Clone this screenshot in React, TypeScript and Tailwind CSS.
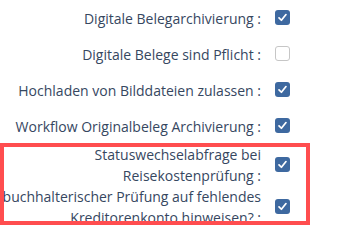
const rows = [
  { lines: ["Digitale Belegarchivierung :"], checked: true },
  { lines: ["Digitale Belege sind Pflicht :"], checked: false },
  { lines: ["Hochladen von Bilddateien zulassen :"], checked: true },
  { lines: ["Workflow Originalbeleg Archivierung :"], checked: true },
  { lines: ["Statuswechselabfrage bei", "Reisekostenprüfung :"], checked: true },
  { lines: ["buchhalterischer Prüfung auf fehlendes", "Kreditorenkonto hinweisen? :"], checked: true },
];

function Checkbox({ checked }: { checked: boolean }) {
  if (!checked) {
    return <div className="w-[15px] h-[15px] rounded-[3px] border border-[#c6c6c6] bg-white" />;
  }
  return (
    <div className="w-[15px] h-[15px] rounded-[3px] bg-[#3e69a0] flex items-center justify-center">
      <svg width="11" height="11" viewBox="0 0 12 12" fill="none">
        <path d="M2.2 6.4 L4.8 9 L9.8 2.8" stroke="white" strokeWidth="1.9" strokeLinecap="round" strokeLinejoin="round" />
      </svg>
    </div>
  );
}

export default function App() {
  return (
    <div className="relative w-[352px] h-[227px] overflow-hidden bg-white font-['Open_Sans',sans-serif] text-[14px] leading-[21px] text-[#36475f]">
      {rows.map((row, i) => (
        <div key={i} className="flex items-center min-h-[36px]">
          <div className="w-[261px] text-right whitespace-nowrap">
            {row.lines.map((l, j) => (
              <div key={j}>{l}</div>
            ))}
          </div>
          <div className="ml-[14px] mt-[-1px]">
            <Checkbox checked={row.checked} />
          </div>
        </div>
      ))}
      {/* highlight annotation */}
      <div className="absolute left-0 top-[143px] w-[310px] h-[82px] border-4 border-[#ff4d4f] pointer-events-none" />
    </div>
  );
}
